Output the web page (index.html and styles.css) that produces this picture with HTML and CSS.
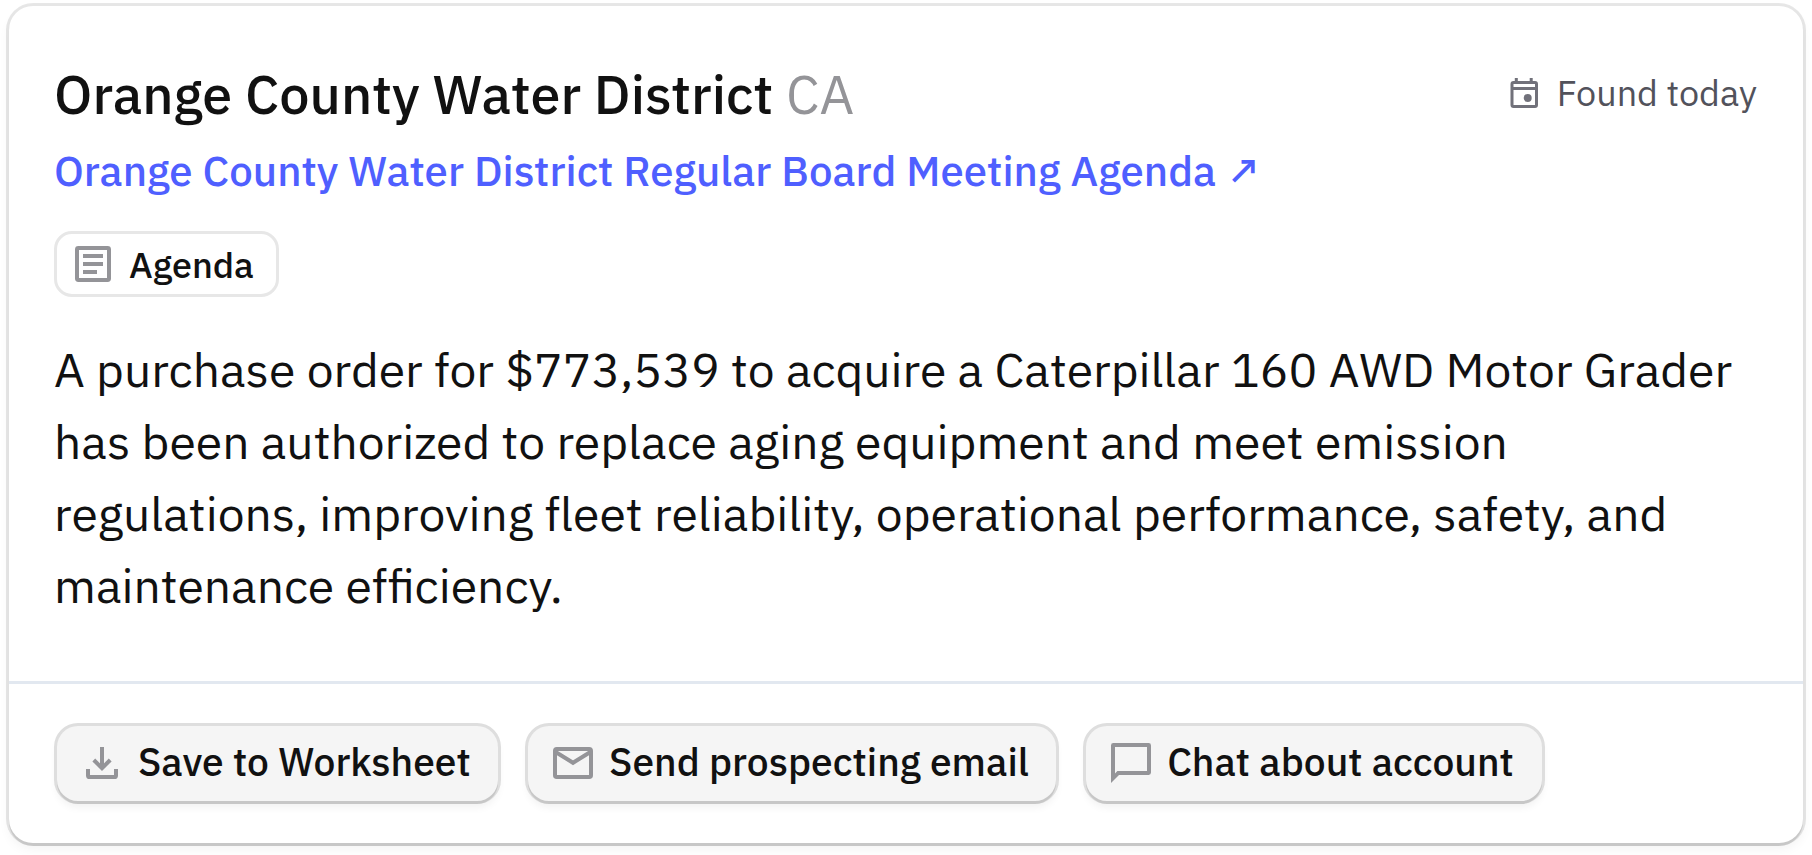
FILE: index.html
```
<!DOCTYPE html>
<html lang="en">
<head>
<meta charset="utf-8">
<title>Orange County Water District</title>
<link rel="stylesheet" href="styles.css">
</head>
<body>
<article class="card">
  <div class="content">
    <header class="header">
      <h1 class="title">Orange County Water District <span class="state">CA</span></h1>
      <div class="found">
        <svg class="found-icon" viewBox="0 0 36 36"><path d="M10.3 3v4M25.2 3v4" stroke="currentColor" stroke-width="3"/><rect x="6" y="7.5" width="24.5" height="24" rx="1.5" fill="none" stroke="currentColor" stroke-width="3"/><path d="M5 13.5h26" stroke="currentColor" stroke-width="3"/><circle cx="21.7" cy="23" r="4" fill="currentColor"/></svg>
        <span>Found today</span>
      </div>
    </header>
    <a class="link" href="#">Orange County Water District Regular Board Meeting Agenda ↗</a>
    <div class="tag">
      <svg class="icon" viewBox="0 0 24 24"><rect x="4" y="4" width="16" height="16" rx=".7" fill="none" stroke="currentColor" stroke-width="2"/><path d="M7 8h10M7 12h10M7 16h7" stroke="currentColor" stroke-width="2"/></svg>
      <span class="tag-label">Agenda</span>
    </div>
    <p class="summary">A purchase order for $773,539 to acquire a Caterpillar 160 AWD Motor Grader has been authorized to replace aging equipment and meet emission regulations, improving fleet reliability, operational performance, safety, and maintenance efficiency.</p>
  </div>
  <footer class="actions">
    <button class="btn">
      <svg class="icon" viewBox="0 0 24 24"><path d="M12 4v10.500M7.900 10.500l4.100 4.100 4.100-4.100M5 15v3.200q0 .8.8.8h12.400q.8 0 .8-.8V15" fill="none" stroke="currentColor" stroke-width="2"/></svg>
      <span class="btn-label">Save to Worksheet</span>
    </button>
    <button class="btn">
      <svg class="icon" viewBox="0 0 24 24"><rect x="3" y="5" width="18" height="14" rx=".9" fill="none" stroke="currentColor" stroke-width="2"/><path d="M3.500 6.600l8.500 5.300 8.500-5.300" fill="none" stroke="currentColor" stroke-width="2"/></svg>
      <span class="btn-label">Send prospecting email</span>
    </button>
    <button class="btn btn-chat">
      <svg class="icon" viewBox="0 0 24 24"><path fill="currentColor" fill-rule="evenodd" d="M3.200 2h17.600Q22 2 22 3.200v13.600Q22 18 20.800 18H6l-4 4V3.200Q2 2 3.200 2zM4 4v13.200L5.200 16H20V4z"/></svg>
      <span class="btn-label">Chat about account</span>
    </button>
  </footer>
</article>
</body>
</html>
```
FILE: styles.css
```
body {
  margin: 0;
  padding: 6px 9px 12px;
  background: #fff;
  color: #111;
  font-family: "IBM Plex Sans", Roboto, sans-serif;
}

.card {
  border-radius: 24px;
  background: #fff;
  box-shadow: 0 3px 0 rgba(0, 0, 0, 0.1), 0 0 0 3px rgba(0, 0, 0, 0.094), 0 6px 12px rgba(0, 0, 0, 0.05);
}

.content {
  display: flex;
  flex-direction: column;
  align-items: flex-start;
  padding: 48px 45px 60px;
}

.header {
  display: flex;
  justify-content: space-between;
  align-items: center;
  align-self: stretch;
}

.title {
  margin: 0;
  font-size: 54px;
  line-height: 81px;
  font-weight: 500;
}

.state {
  color: #949498;
  font-weight: 400;
}

.found {
  display: flex;
  align-items: center;
  gap: 15px;
  margin: 0 1px 3px 0;
  color: #52525b;
  font-size: 36px;
  line-height: 54px;
}

.found-icon {
  width: 36px;
  height: 36px;
  color: #71717a;
}

.link {
  margin-top: 4px;
  color: #4f5fff;
  font-size: 42px;
  line-height: 63px;
  font-weight: 500;
  text-decoration: none;
}

.tag {
  display: flex;
  align-items: center;
  gap: 12px;
  height: 60px;
  margin-top: 29px;
  padding: 0 22px 0 12px;
  border: 3px solid #e7e7e7;
  border-radius: 18px;
  font-size: 36px;
  line-height: 54px;
  font-weight: 500;
}

.tag-label {
  padding-top: 1px;
}

.icon {
  width: 48px;
  height: 48px;
  flex: none;
  color: #949498;
}

.summary {
  margin: 36px 0 0;
  font-size: 48px;
  line-height: 72px;
}

.actions {
  display: flex;
  gap: 30.300px;
  padding: 42px 48px;
  border-top: 3px solid #e2e8f0;
}

.btn {
  display: flex;
  align-items: center;
  gap: 12px;
  height: 75px;
  padding: 0 27px 0 21px;
  border: 0;
  border-radius: 21px;
  background: #f5f5f5;
  box-shadow: 0 3px 0 rgba(0, 0, 0, 0.1), 0 0 0 3px #dedede, 0 6px 9px rgba(0, 0, 0, 0.06);
  color: #111;
  font-family: inherit;
  font-size: 39px;
  line-height: 54px;
  font-weight: 500;
}

.btn .icon {
  margin-bottom: 1px;
}

.btn-label {
  padding-bottom: 4px;
}

.btn-chat {
  padding-right: 28px;
}
```
